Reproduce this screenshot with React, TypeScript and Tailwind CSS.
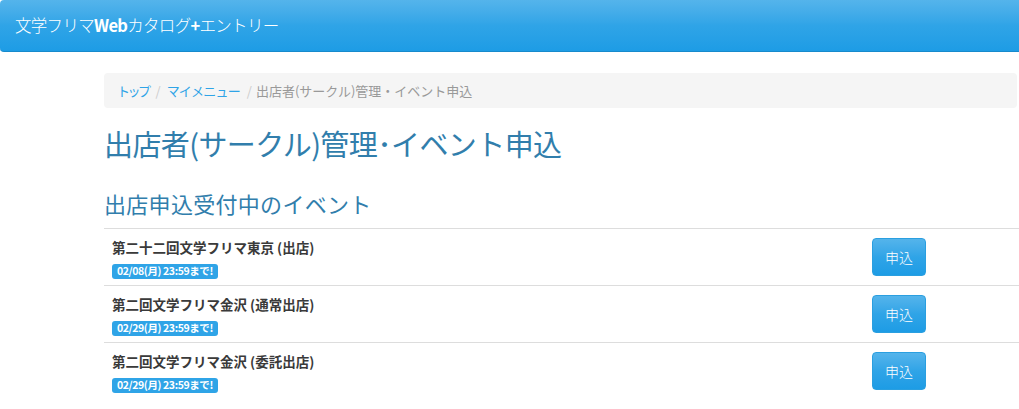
import React from "react";

const font = '"Noto Sans CJK JP", "Noto Sans", sans-serif';

const rows = [
  { title: "第二十二回文学フリマ東京 (出店)", deadline: "02/08(月) 23:59まで!" },
  { title: "第二回文学フリマ金沢 (通常出店)", deadline: "02/29(月) 23:59まで!" },
  { title: "第二回文学フリマ金沢 (委託出店)", deadline: "02/29(月) 23:59まで!" },
];

export default function App() {
  return (
    <div className="w-[1019px] h-[409px] overflow-hidden bg-white" style={{ fontFamily: font }}>
      <div className="h-[52px] rounded-[4px] border-b border-[#178acc] bg-gradient-to-b from-[#54b4eb] via-[#2fa4e7] to-[#1d9ce5] flex items-center pl-[15px] w-[1040px]">
        <span className="text-white text-[16.5px] font-light leading-none tracking-[-0.7px]">
          文学フリマ<b className="font-bold">Web</b>カタログ<b className="font-bold">+</b>エントリー
        </span>
      </div>
      <div className="pl-[104px] pt-[21px]">
        <div className="w-[913px] h-[35px] bg-[#f5f5f5] rounded-[4px] flex items-center pl-[13px] text-[13px] leading-none">
          <a className="text-[#2fa4e7] tracking-[-2.5px]">トップ</a>
          <span className="text-[#cccccc] pl-[7px] pr-[6px]">/</span>
          <a className="text-[#2fa4e7] tracking-[-0.8px]">マイメニュー</a>
          <span className="text-[#cccccc] pl-[7px] pr-[4px]">/</span>
          <span className="text-[#999999]">出店者(サークル)管理・イベント申込</span>
        </div>
        <h1 className="text-[#317eac] text-[29px] leading-none mt-[21px] tracking-[-0.6px]">
          出店者(サークル)管理･イベント申込
        </h1>
        <h2 className="text-[#317eac] text-[22px] leading-none mt-[34px] tracking-[0.3px]">
          出店申込受付中のイベント
        </h2>
        <div className="mt-[14px] w-[940px]">
          {rows.map((r, i) => (
            <div key={i} className="h-[57px] border-t border-[#dddddd] flex items-start">
              <div className="w-[768px] pl-[8px] pt-[9px]">
                <div className="text-[#3a3a3a] text-[13.5px] font-bold leading-[18px]">{r.title}</div>
                <span className="inline-block mt-[5px] bg-[#2fa4e7] text-white text-[10.5px] font-bold leading-none px-[5px] py-[2px] rounded-[3px] tracking-[-0.4px]">
                  {r.deadline}
                </span>
              </div>
              <div className="pt-[9px]">
                <button className="w-[54px] h-[38px] rounded-[4px] border border-[#2a9fe0] bg-gradient-to-b from-[#54b4eb] via-[#2fa4e7] to-[#1d9ce5] text-white text-[14px] font-light">
                  申込
                </button>
              </div>
            </div>
          ))}
        </div>
      </div>
    </div>
  );
}
